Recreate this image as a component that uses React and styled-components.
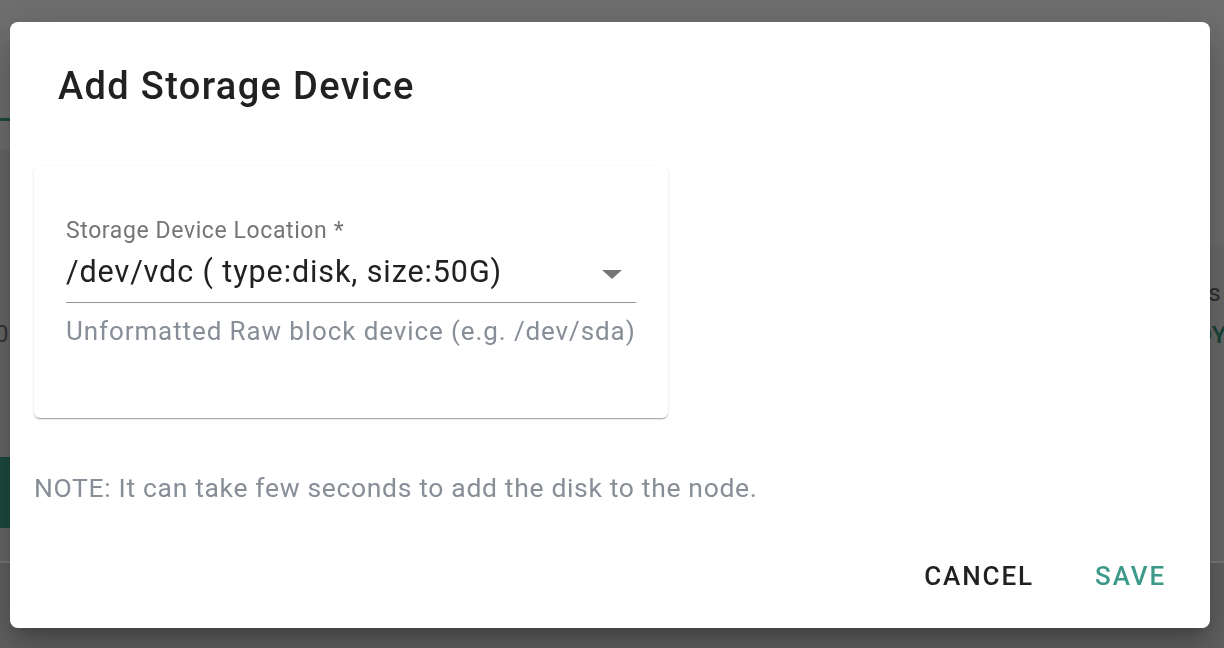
import React from "react";
import styled, { createGlobalStyle } from "styled-components";

const Global = createGlobalStyle`
  html, body { margin: 0; padding: 0; height: 100%; }
  body { font-family: Roboto, "Noto Sans", "Liberation Sans", sans-serif; overflow: hidden; }
  #root { height: 100%; }
`;

/* ---------- underlying page (dimmed by the backdrop) ---------- */
const Page = styled.div`
  height: 100vh;
  display: flex;
  flex-direction: column;
  background: #dedede;
  overflow: hidden;
`;
const Header = styled.div`
  height: 118px;
  flex: none;
`;
const TabIndicator = styled.div`
  height: 3px;
  width: 180px;
  background: #3a9480;
  flex: none;
`;
const Body = styled.div`
  flex: none;
  height: 442px;
  box-sizing: border-box;
  display: grid;
  grid-template-columns: 1fr 240px;
  padding-top: 29px;
  gap: 24px;
  border-bottom: 2px solid #f2f2f2;
`;
const LeftPanel = styled.div`
  background: #d0d0d0;
  display: flex;
  flex-direction: column;
  padding-top: 170px;
`;
const PanelText = styled.div`
  font-size: 24px;
  line-height: 28px;
  color: #6a6a6a;
  margin-left: -5px;
`;
const GreenBlock = styled.div`
  margin-top: 109px;
  height: 71px;
  width: 320px;
  background: #3a9480;
`;
const RightPanel = styled.div`
  margin-top: 95px;
  background: #d4d4d4;
  padding: 29px 0 0 168px;
  white-space: nowrap;
`;
const RightLabel = styled.div`
  font-size: 24px;
  color: #5a5a5a;
  line-height: 38px;
`;
const RightValue = styled.div`
  margin-top: 4px;
  font-size: 24px;
  font-weight: 500;
  color: #2f8a72;
  line-height: 38px;
`;
const Footer = styled.div`
  flex: 1;
  background: #c2c2c2;
`;

/* ---------- dialog ---------- */
const Backdrop = styled.div`
  position: fixed;
  inset: 0;
  background: rgba(0, 0, 0, 0.5);
  display: flex;
  align-items: center;
  justify-content: center;
  padding: 2px 4px 0 0;
`;
const Dialog = styled.div`
  width: 1200px;
  height: 606px;
  flex: none;
  box-sizing: border-box;
  background: #fff;
  border-radius: 8px;
  box-shadow: 0 11px 15px -7px rgba(0,0,0,0.2), 0 24px 38px 3px rgba(0,0,0,0.14), 0 9px 46px 8px rgba(0,0,0,0.12);
  display: flex;
  flex-direction: column;
  padding: 36px 24px 0 24px;
`;
const Title = styled.h2`
  margin: 0;
  padding-left: 24px;
  font-size: 38px;
  font-weight: 500;
  letter-spacing: 1.35px;
  line-height: 57.6px;
  color: #212121;
`;
const Card = styled.div`
  margin-top: 50px;
  width: 634px;
  height: 252px;
  box-sizing: border-box;
  border-radius: 6px;
  background: #fff;
  box-shadow: 0 2px 1px -1px rgba(0,0,0,0.2), 0 1px 1px 0 rgba(0,0,0,0.14), 0 1px 3px 0 rgba(0,0,0,0.12);
  padding: 52px 32px 0 32px;
`;
const Label = styled.div`
  font-size: 23px;
  letter-spacing: 0.6px;
  line-height: 25px;
  color: #757575;
`;
const SelectRow = styled.div`
  display: flex;
  align-items: center;
  justify-content: space-between;
  padding: 12px 0 13px;
  border-bottom: 1.5px solid #949494;
`;
const Value = styled.span`
  font-size: 30.5px;
  letter-spacing: 0.9px;
  line-height: 34px;
  color: #212121;
`;
const Arrow = styled.svg`
  width: 20px;
  height: 9px;
  margin-right: 14px;
  margin-top: 5px;
  fill: #757575;
`;
const Helper = styled.div`
  margin-top: 13.5px;
  font-size: 26px;
  letter-spacing: 0.9px;
  line-height: 30px;
  white-space: nowrap;
  color: #878e97;
`;
const Note = styled.p`
  margin: 55px 0 0;
  font-size: 26.5px;
  letter-spacing: 0.66px;
  line-height: 30px;
  color: #878e97;
`;
const Actions = styled.div`
  margin-top: 58px;
  display: flex;
  justify-content: flex-end;
  gap: 61px;
  padding-right: 20px;
`;
const Button = styled.button`
  border: none;
  background: none;
  padding: 0;
  font-family: inherit;
  font-size: 26px;
  font-weight: 500;
  letter-spacing: 1.9px;
  line-height: 30px;
  text-transform: uppercase;
  color: ${(p) => (p.$primary ? "#3d9a8b" : "#212121")};
  cursor: pointer;
`;

export default function App() {
  return (
    <>
      <Global />
      <Page>
        <Header />
        <TabIndicator />
        <Body>
          <LeftPanel>
            <PanelText>0</PanelText>
            <GreenBlock />
          </LeftPanel>
          <RightPanel>
            <RightLabel>Status</RightLabel>
            <RightValue>READY</RightValue>
          </RightPanel>
        </Body>
        <Footer />
      </Page>
      <Backdrop>
        <Dialog>
          <Title>Add Storage Device</Title>
          <Card>
            <Label>Storage Device Location *</Label>
            <SelectRow>
              <Value>/dev/vdc ( type:disk, size:50G)</Value>
              <Arrow viewBox="0 0 20 9">
                <path d="M0 0 L20 0 L10 9 Z" />
              </Arrow>
            </SelectRow>
            <Helper>Unformatted Raw block device (e.g. /dev/sda)</Helper>
          </Card>
          <Note>NOTE: It can take few seconds to add the disk to the node.</Note>
          <Actions>
            <Button>Cancel</Button>
            <Button $primary>Save</Button>
          </Actions>
        </Dialog>
      </Backdrop>
    </>
  );
}
